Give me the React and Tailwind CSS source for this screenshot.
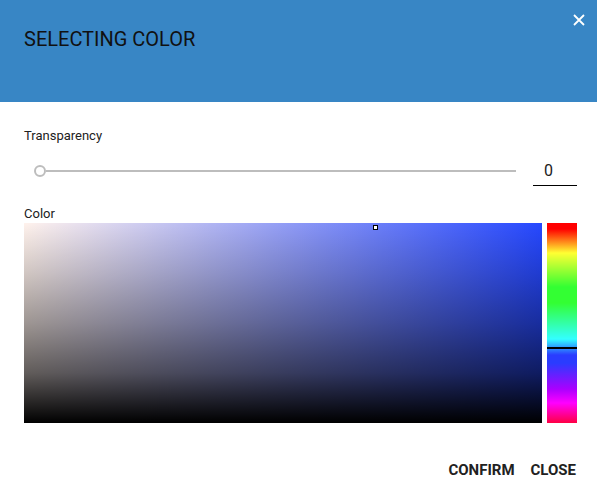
import { useState } from "react";

export default function App() {
  const [alpha, setAlpha] = useState("0");

  return (
    <div className="w-[597px] h-[500px] bg-white font-['Roboto',sans-serif] text-[#212121] overflow-hidden">
      {/* header */}
      <div className="relative h-[102px] bg-[#3886c5] px-6 pt-[27px]">
        <h2 className="text-[20px] leading-[24px] text-[#111]">SELECTING COLOR</h2>
        <button className="absolute right-[11px] top-[13px] w-[14px] h-[14px] text-white">
          <svg viewBox="0 0 14 14" width="14" height="14" fill="none" stroke="currentColor" strokeWidth="1.8">
            <path d="M2 2 L12 12 M12 2 L2 12" />
          </svg>
        </button>
      </div>

      {/* body */}
      <div className="pl-6 pr-5 pt-[26px]">
        <div className="text-[13px] leading-[15px]">Transparency</div>

        <div className="flex items-center h-[36px] mt-[10px]">
          <div className="flex items-center flex-1 pl-[10px]">
            <div className="w-[12px] h-[12px] rounded-full border-2 border-[#bdbdbd] bg-white shrink-0" />
            <div className="flex-1 h-[2px] bg-[#bdbdbd]" />
          </div>
          <div className="ml-[17px] w-[44px] h-[30px] border-b border-black flex items-center">
            <input
              className="w-full pl-[11px] text-[16px] outline-none bg-transparent"
              value={alpha}
              onChange={(e) => setAlpha(e.target.value)}
            />
          </div>
        </div>

        <div className="text-[13px] leading-[15px] mt-[17px]">Color</div>

        <div className="flex gap-[5px] mt-[2px]">
          <div
            className="relative w-[518px] h-[200px]"
            style={{
              background:
                "linear-gradient(to top, rgba(0,0,0,1) 0%, rgba(0,0,0,0.62) 25%, rgba(0,0,0,0.38) 50%, rgba(0,0,0,0.18) 75%, rgba(0,0,0,0) 100%), linear-gradient(to right, rgb(255,242,236), rgba(255,255,255,0)), #2648ff",
            }}
          >
            <div className="absolute left-[349px] top-[2px] w-[5px] h-[5px] border border-black bg-white" />
          </div>
          <div className="relative w-[30px] h-[200px] bg-[linear-gradient(to_bottom,#ff0000_0%,#ff0000_3%,#ffff33_15%,#33ff33_32%,#33ff33_40%,#33ffff_58%,#2a3cff_66%,#2a3cff_70%,#aa00ff_83%,#ff00ff_90%,#ff0044_100%)]">
            <div className="absolute left-0 right-0 top-[124px] h-[2px] bg-black" />
          </div>
        </div>

        <div className="flex justify-end gap-4 mt-[36px] pr-px text-[15px] font-bold text-[#212121]">
          <button>CONFIRM</button>
          <button>CLOSE</button>
        </div>
      </div>
    </div>
  );
}
